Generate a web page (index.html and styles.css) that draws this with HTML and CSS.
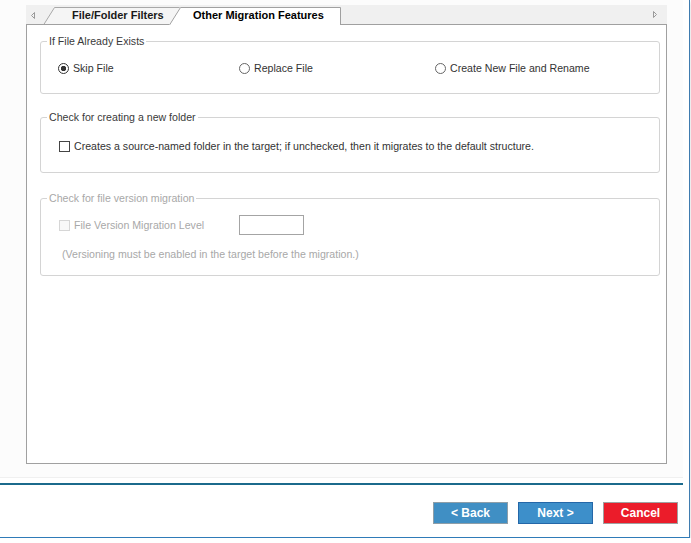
FILE: index.html
```html
<!DOCTYPE html>
<html lang="en">
<head>
    <meta charset="UTF-8">
    <title>Migration Options</title>
    <link rel="stylesheet" href="styles.css">
</head>
<body>
    <div class="window">
        <div class="content">
            <div class="tabs">
                <span class="tab">File/Folder Filters</span>
                <span class="tab tab-active">Other Migration Features</span>
            </div>

            <div class="panel">
                <fieldset class="group group-exists">
                    <legend>If File Already Exists</legend>
                    <div class="radio-row">
                        <label class="opt"><span class="radio checked"></span>Skip File</label>
                        <label class="opt"><span class="radio"></span>Replace File</label>
                        <label class="opt"><span class="radio"></span>Create New File and Rename</label>
                    </div>
                </fieldset>

                <fieldset class="group group-folder">
                    <legend>Check for creating a new folder</legend>
                    <div class="check-row">
                        <label class="opt"><span class="check"></span>Creates a source-named folder in the target; if unchecked, then it migrates to the default structure.</label>
                    </div>
                </fieldset>

                <fieldset class="group group-version disabled">
                    <legend>Check for file version migration</legend>
                    <div class="version-row">
                        <label class="opt"><span class="check"></span>File Version Migration Level</label>
                        <span class="level-box"></span>
                    </div>
                    <div class="note">(Versioning must be enabled in the target before the migration.)</div>
                </fieldset>
            </div>
        </div>

        <div class="divider"></div>

        <div class="footer">
            <button class="btn btn-back">&lt; Back</button>
            <button class="btn btn-next">Next &gt;</button>
            <button class="btn btn-cancel">Cancel</button>
        </div>
    </div>
</body>
</html>
```

FILE: styles.css
```css
* {
    box-sizing: border-box;
}

body {
    margin: 0;
    font-family: "Liberation Sans", Arial, sans-serif;
    font-size: 10.6px;
    color: #333;
    background: #fff;
}

.window {
    width: 690px;
    height: 538px;
    background: #fff;
    border-right: 1px solid #3f7cb0;
    border-bottom: 1px solid #2f7bb8;
    box-shadow: 0 2px 4px rgba(0, 0, 0, 0.18);
}

.content {
    width: 683px;
    height: 478px;
    padding: 5px 16px 0 26px;
    background: #fcfcfc;
    border-bottom: 1px solid #f0f0f0;
}

/* tab strip: outlines drawn as svg background */
.tabs {
    display: flex;
    height: 20px;
    padding-left: 46px;
    background: url("data:image/svg+xml,%3Csvg xmlns='http://www.w3.org/2000/svg' width='641' height='20'%3E%3Crect width='641' height='20' fill='%23f0f0f0'/%3E%3Cpath d='M17 20L28 2H160V20Z' fill='%23f5f5f5'/%3E%3Cpath d='M17.5 20L28.5 2.5H160' fill='none' stroke='%23a8a8a8'/%3E%3Cpath d='M143 20L154 2H314V20Z' fill='%23fff'/%3E%3Cpath d='M143.5 20L154.5 2.5H314.5V20' fill='none' stroke='%23a0a0a0'/%3E%3Cpath d='M0 19.5H143M314 19.5H641' stroke='%23a0a0a0'/%3E%3Cpath d='M8.5 7.5L5.5 10.5L8.5 13.5Z' fill='none' stroke='%23999'/%3E%3Cpath d='M627.5 6.5L630.5 9.5L627.5 12.5Z' fill='none' stroke='%23999'/%3E%3C/svg%3E") no-repeat;
}

.tab {
    width: 121px;
    font-size: 11px;
    line-height: 21px;
    font-weight: bold;
    color: #1a1a1a;
    white-space: nowrap;
}

.tab-active {
    width: auto;
    color: #000;
}

.panel {
    height: 439px;
    padding: 10px 6px 0 13px;
    background: #fff;
    border: 1px solid #a0a0a0;
    border-top: none;
}

.group {
    margin: 0;
    padding: 0;
    min-width: 0;
    border: 1px solid #d4d4d4;
    border-radius: 3px;
}

.group legend {
    margin-left: 6px;
    padding: 0 2px;
    line-height: 13px;
    color: #3a3a3a;
}

.group-folder {
    margin-top: 17px;
}

.group-version {
    margin-top: 19px;
}

.opt {
    display: inline-flex;
    align-items: center;
    gap: 4px;
    white-space: nowrap;
}

.radio-row {
    display: grid;
    grid-template-columns: 181px 196px 1fr;
    align-items: center;
    height: 16px;
    margin: 12px 0 17px 17px;
}

.radio {
    width: 11px;
    height: 11px;
    border: 1px solid #666;
    border-radius: 50%;
    background: #fff;
}

.radio.checked {
    border-color: #333;
    background: radial-gradient(circle, #333 0 2.4px, #fff 3px);
}

.check {
    width: 11px;
    height: 11px;
    border: 1px solid #444;
    background: #fff;
}

.check-row {
    display: flex;
    align-items: center;
    height: 16px;
    margin: 14px 0 18px 18px;
}

.disabled,
.disabled legend {
    color: #a8a8a8;
}

.disabled .check {
    border-color: #d6d6d6;
    background: #f8f8f8;
}

.version-row {
    display: grid;
    grid-template-columns: 180px 65px;
    align-items: center;
    margin: 10px 0 0 18px;
}

.level-box {
    height: 20px;
    border: 1px solid #a4a4a4;
    background: #fff;
}

.note {
    margin: 12px 0 14px 21px;
    line-height: 14px;
}

.divider {
    width: 683px;
    height: 2px;
    margin-top: 5px;
    background: #1b6a8c;
}

.footer {
    display: flex;
    justify-content: flex-end;
    gap: 10px;
    padding: 17px 11px 0 0;
}

.btn {
    width: 75px;
    height: 22px;
    padding: 0;
    font-family: "Liberation Sans", Arial, sans-serif;
    font-size: 12px;
    font-weight: bold;
    color: #fff;
    border: 1px solid #999;
}

.btn-back {
    background: #408fc4;
    border-color: #8e9ea8;
}

.btn-next {
    background: #3d8fca;
    border-color: #2467a8;
}

.btn-cancel {
    background: #eb1c2a;
    border-color: #a0a0a0;
}
```
